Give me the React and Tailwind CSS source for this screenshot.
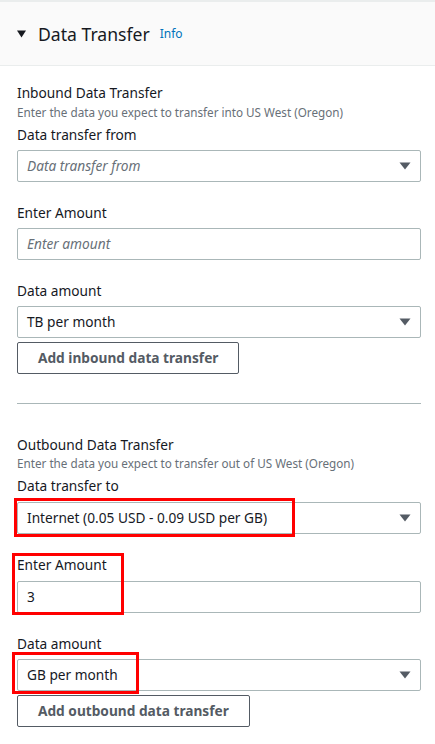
import { useState } from "react";

const font = { fontFamily: '"Noto Sans", "Liberation Sans", sans-serif' };

function Caret() {
  return (
    <svg width="12" height="8" viewBox="0 0 12 8" className="shrink-0">
      <path d="M0.5 0.5 L11.5 0.5 L6 7.5 Z" fill="#545b64" />
    </svg>
  );
}

function SelectBox({ value, placeholder }) {
  return (
    <div className="h-[32px] border border-[#aab7b8] rounded-[2px] bg-white flex items-center justify-between pl-[9px] pr-[9px]">
      {value ? (
        <span className="text-[13.7px] text-[#16191f]">{value}</span>
      ) : (
        <span className="text-[13.7px] italic text-[#687078]">{placeholder}</span>
      )}
      <Caret />
    </div>
  );
}

function TextBox({ value, placeholder }) {
  return (
    <div className="h-[32px] border border-[#aab7b8] rounded-[2px] bg-white flex items-center pl-[9px]">
      {value ? (
        <span className="text-[13.7px] text-[#16191f]">{value}</span>
      ) : (
        <span className="text-[13.7px] italic text-[#687078]">{placeholder}</span>
      )}
    </div>
  );
}

function Label({ children, className = "" }) {
  return <div className={`text-[13.7px] leading-[20px] text-[#16191f] ${className}`}>{children}</div>;
}

// red annotation frames sit over the fields
function Mark({ className }) {
  return <div className={`absolute border-[3px] border-[#ff0000] pointer-events-none ${className}`} />;
}

export default function App() {
  const [open] = useState(true);

  return (
    <div className="w-[435px] min-h-[744px] bg-white" style={font}>
      <div className="h-[66px] bg-[#fafafa] border-t-2 border-b border-[#eaeded] flex items-center pl-[17px]">
        <svg width="9" height="8" viewBox="0 0 9 8" className="mr-[12px]">
          <path d="M0 0.5 L9 0.5 L4.5 7.5 Z" fill="#16191f" />
        </svg>
        <span className="text-[17.6px] text-[#16191f] leading-[24px]">Data Transfer</span>
        <span className="ml-[10px] text-[12px] text-[#0073bb] leading-[16px] mt-[1px]">Info</span>
      </div>

      {open && (
        <div className="pl-[17px] pr-[14px]">
          {/* Inbound */}
          <Label className="mt-[17px]">Inbound Data Transfer</Label>
          <div className="text-[11.7px] leading-[16px] text-[#687078] mt-px">
            Enter the data you expect to transfer into US West (Oregon)
          </div>
          <Label className="mt-[5px] mb-[5px]">Data transfer from</Label>
          <SelectBox placeholder="Data transfer from" />

          <Label className="mt-[21px] mb-[5px]">Enter Amount</Label>
          <TextBox placeholder="Enter amount" />

          <Label className="mt-[21px] mb-[5px]">Data amount</Label>
          <SelectBox value="TB per month" />
          <button className="mt-[4px] h-[32px] px-[20px] border border-[#545b64] rounded-[2px] text-[13.7px] font-bold text-[#545b64] bg-white">
            Add inbound data transfer
          </button>

          <div className="mt-[29px] border-t border-[#aab7b8]" />

          {/* Outbound */}
          <Label className="mt-[31px]">Outbound Data Transfer</Label>
          <div className="text-[11.7px] leading-[16px] text-[#687078]">
            Enter the data you expect to transfer out of US West (Oregon)
          </div>
          <Label className="mt-[5px] mb-[6px]">Data transfer to</Label>
          <div className="relative">
            <SelectBox value="Internet (0.05 USD - 0.09 USD per GB)" />
            <Mark className="-left-[3px] -top-[4px] w-[281px] h-[39px]" />
          </div>

          <div className="relative">
            <Label className="mt-[21px] mb-[6px]">Enter Amount</Label>
            <TextBox value="3" />
            <Mark className="-left-[5px] top-[-2px] w-[112px] h-[62px]" />
          </div>

          <Label className="mt-[21px] mb-[5px]">Data amount</Label>
          <div className="relative">
            <SelectBox value="GB per month" />
            <Mark className="-left-[5px] -top-[7px] w-[127px] h-[42px]" />
          </div>
          <button className="mt-[4px] h-[32px] px-[20px] border border-[#545b64] rounded-[2px] text-[13.7px] font-bold text-[#545b64] bg-white">
            Add outbound data transfer
          </button>
        </div>
      )}
    </div>
  );
}
